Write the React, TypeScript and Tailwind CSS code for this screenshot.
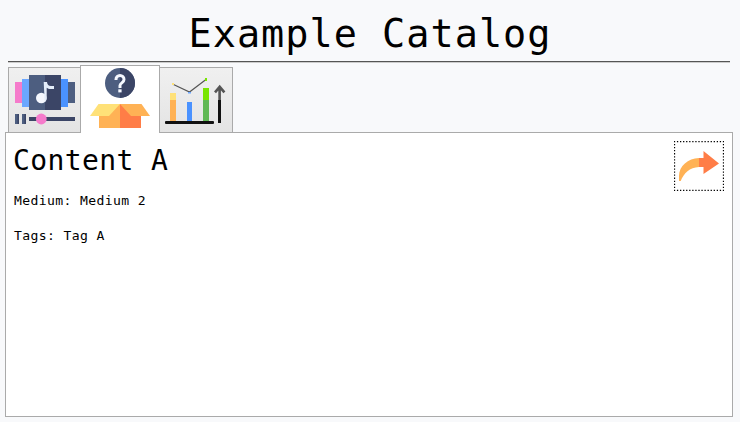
import type { ReactNode } from "react";

function MediaIcon() {
  return (
    <svg width="71" height="64" viewBox="9 68 71 64">
      <path fill="#f57bcb" d="M15 82h7v21h-7z" />
      <path fill="#6ba7ff" d="M22 79h7v28h-7z" />
      <path fill="#4a92ff" d="M61 79h7v28h-7z" />
      <path fill="#4d5e80" d="M68 82h7v21h-7zM29 75h16v35H29z" />
      <path fill="#3b4566" d="M45 75h16v35H45z" />
      <circle cx="41.300" cy="98" r="5.300" fill="#f5f8ff" />
      <path fill="#e4edfa" d="M43.700 82H47c.3 2.500 1.500 4 4 4h3v3h-3.500c-1.500 0-2.700-.4-3.800-1.300V98c0 2-.8 3.500-2 4.300z" />
      <path fill="#4d5e80" d="M15 114h4v10h-4zM22 114h4v10h-4z" />
      <path fill="#3b4566" d="M17.500 114H19v10h-1.500zM24.500 114H26v10h-1.500zM29 117h46v4H29z" />
      <circle cx="41.300" cy="119" r="5.400" fill="#f57bcb" />
    </svg>
  );
}

function ContentIcon() {
  return (
    <svg width="78" height="67" viewBox="81 66 78 67">
      <circle cx="120" cy="83" r="15" fill="#4d5e80" />
      <path fill="#3b4566" d="M120 68a15 15 0 0 1 0 30z" />
      <path fill="none" stroke="#f5f8ff" strokeWidth="3" d="M116 80v-.5a4 4 0 0 1 8 0c0 3.300-4 3.300-4 6V88" />
      <path fill="#f5f8ff" d="M118.300 89.300h3.300v3.100h-3.300z" />
      <path fill="#ffb255" d="M99 104h21v24H99z" />
      <path fill="#ff7d47" d="M120 104h21v24h-21z" />
      <path fill="#ffe178" d="M98.500 104H120l-11 12H90z" />
      <path fill="#ffb255" d="M120 104h21.500l8.500 12h-19z" />
    </svg>
  );
}

function StatisticsIcon() {
  return (
    <svg width="72" height="64" viewBox="160 68 72 64">
      <path fill="#ffe178" d="M170 93h6v7h-6z" />
      <path fill="#ffb255" d="M170 100h6v21h-6z" />
      <path fill="#4a92ff" d="M187 102h5v19h-5z" />
      <path fill="#78e500" d="M203 88h6v12h-6z" />
      <path fill="#60b855" d="M203 100h6v21h-6z" />
      <path fill="none" stroke="#555" strokeWidth="1.200" d="M173.500 84.500l16 7.500L206 79.500" />
      <path fill="#ffe178" d="M172 83h2v2h-2z" />
      <path fill="#6ba7ff" d="M188 92h3v1.500h-3z" />
      <path fill="#78e500" d="M205 78h2v3h-2z" />
      <path fill="none" stroke="#555" strokeWidth="2.600" d="M215 92.300l4.700-5.500 4.700 5.500M219.600 87v13" />
      <path fill="#111" d="M218 100h3v23h-3z" />
      <rect x="165" y="121" width="49" height="3" rx="1" fill="#111" />
    </svg>
  );
}

function ShareIcon() {
  return (
    <svg width="50" height="50" viewBox="674 141 50 50">
      <rect x="674.500" y="141.500" width="49" height="49" fill="none" stroke="#000" strokeWidth="1.300" strokeDasharray="1.3 1.7625" strokeDashoffset="0.65" />
      <path fill="#ffb255" d="M699 158c-11 .5-20 8-20 18v5h1.700c3-7.500 9-13.700 18.300-14z" />
      <path fill="#ff7d47" d="M699 158h4.500v-7L719 163.500 703.500 174v-7H699z" />
    </svg>
  );
}

function Tab({ label, selected = false, className, children }: { label: string; selected?: boolean; className: string; children: ReactNode }) {
  const look = selected
    ? "z-10 h-[68px] border-[#aaa] bg-white"
    : "h-[65px] border-[#aaa] bg-linear-to-b from-[#f0f0f0] to-[#e4e4e4]";
  return (
    <button role="tab" aria-label={label} aria-selected={selected} className={`relative block shrink-0 border border-b-0 ${look} ${className}`}>
      {children}
    </button>
  );
}

export default function App() {
  return (
    <main className="flex h-[422px] w-[740px] flex-col bg-[#f8f9fb] font-['DejaVu_Sans_Mono',monospace] text-black">
      <h1 className="h-[61px] pt-[4px] text-center text-[38.5px] leading-[60px] tracking-[1.02px]">Example Catalog</h1>
      <div className="mr-[10px] ml-2 h-[2px] shrink-0 border-t border-b border-t-[#555] border-b-[#ccc]" />
      <div role="tablist" className="-mb-px flex h-[70px] shrink-0 items-end pl-2">
        <Tab label="Media" className="mb-px w-[72px] border-r-0">
          <MediaIcon />
        </Tab>
        <Tab label="Content" selected className="w-[80px]">
          <ContentIcon />
        </Tab>
        <Tab label="Statistics" className="mb-px w-[73px] border-l-0">
          <StatisticsIcon />
        </Tab>
      </div>
      <section className="mr-[7px] ml-[5px] flex h-[285px] shrink-0 items-start justify-between border border-[#aaa] bg-white pt-2 pr-2 pl-[7px]">
        <div>
          <h2 className="h-[42px] pt-px text-[28px] leading-[38px] tracking-[0.4px]">Content A</h2>
          <p className="h-[35px] pl-px text-[13.1px] leading-[35px] tracking-[0.36px]">Medium: Medium 2</p>
          <p className="h-[35px] pl-px text-[13.1px] leading-[35px] tracking-[0.36px]">Tags: Tag A</p>
        </div>
        <button aria-label="Share" className="size-[50px]">
          <ShareIcon />
        </button>
      </section>
    </main>
  );
}
